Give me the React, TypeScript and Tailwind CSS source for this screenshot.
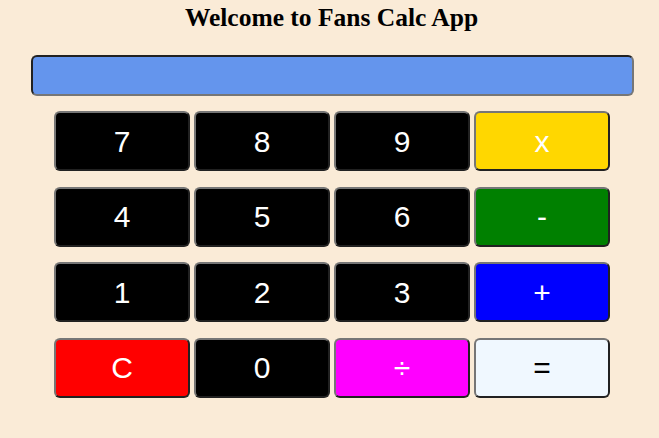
const keys = [
  { label: "7", bg: "bg-black", text: "text-white" },
  { label: "8", bg: "bg-black", text: "text-white" },
  { label: "9", bg: "bg-black", text: "text-white" },
  { label: "x", bg: "bg-[#ffd700]", text: "text-white" },
  { label: "4", bg: "bg-black", text: "text-white" },
  { label: "5", bg: "bg-black", text: "text-white" },
  { label: "6", bg: "bg-black", text: "text-white" },
  { label: "-", bg: "bg-[#008000]", text: "text-white" },
  { label: "1", bg: "bg-black", text: "text-white" },
  { label: "2", bg: "bg-black", text: "text-white" },
  { label: "3", bg: "bg-black", text: "text-white" },
  { label: "+", bg: "bg-[#0000ff]", text: "text-white" },
  { label: "C", bg: "bg-[#ff0000]", text: "text-white" },
  { label: "0", bg: "bg-black", text: "text-white" },
  { label: "÷", bg: "bg-[#ff00ff]", text: "text-white" },
  { label: "=", bg: "bg-[#f0f8ff]", text: "text-black" },
];

export default function App() {
  return (
    <div className="w-[659px] h-[438px] bg-[#faebd7] overflow-hidden">
      <h1 className="pt-[4px] pl-[4px] text-center text-[25.5px] leading-[28px] font-bold font-['Liberation_Serif',serif] text-black">
        Welcome to Fans Calc App
      </h1>
      <div className="mt-[23px] ml-[31px] w-[603px] h-[41px] rounded-[6px] border-2 [border-style:inset] border-[#767676] bg-[#6495ed]" />
      <div className="mt-[15px] ml-[54px] grid grid-cols-[repeat(4,136px)] gap-x-[4px] gap-y-[15.5px]">
        {keys.map((k) => (
          <button
            key={k.label}
            className={`h-[60px] rounded-[6px] border-2 [border-style:outset] border-[#767676] ${k.bg} ${k.text} text-[30px] font-['Liberation_Sans',Arial,sans-serif] flex items-center justify-center`}
          >
            {k.label}
          </button>
        ))}
      </div>
    </div>
  );
}
